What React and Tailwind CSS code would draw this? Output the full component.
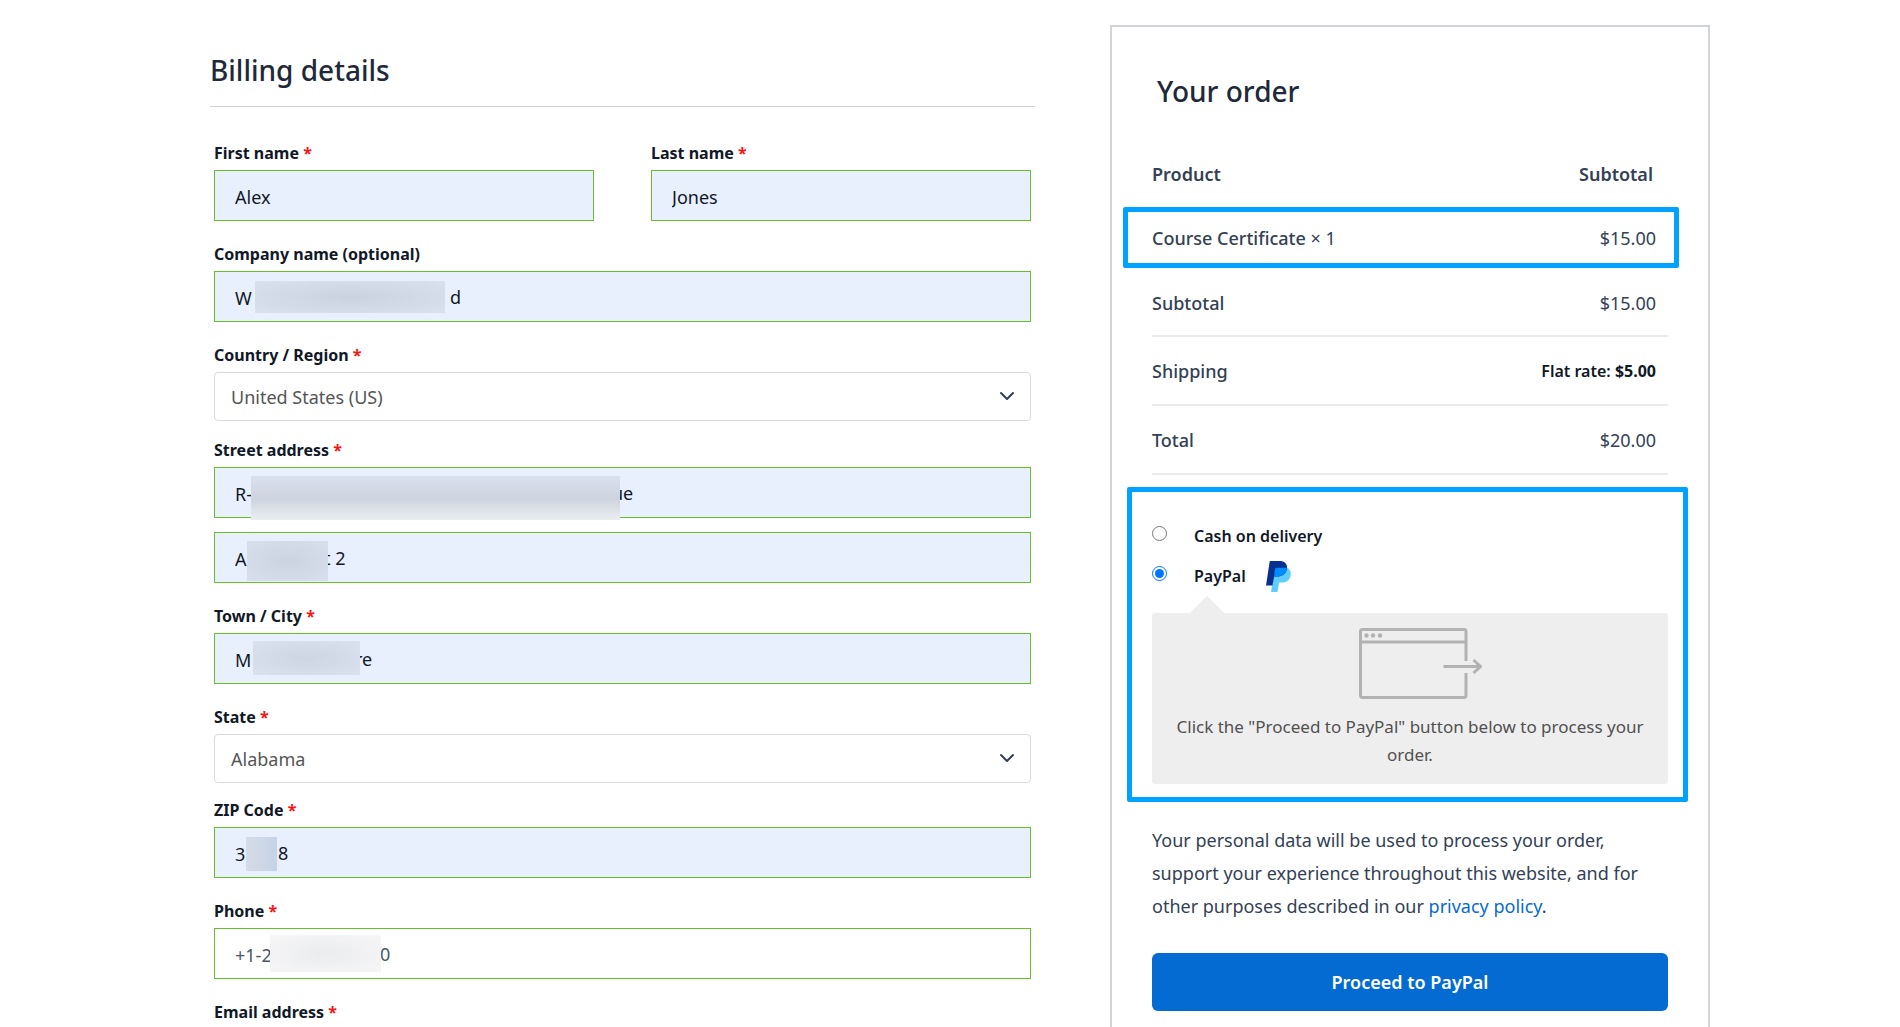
import { ChevronDown } from "lucide-react";

const labelText = "text-[16px] leading-6 font-bold text-[#111827]";

function Label({ htmlFor, children, required = true }) {
  return (
    <label htmlFor={htmlFor} className={`mb-[5px] block ${labelText}`}>
      {children}
      {required && <span className="text-[#ff1010]"> *</span>}
    </label>
  );
}

function Input({ id, value, label, plain, tail, tailClass, maskClass, type = "text" }) {
  return (
    <div className="relative">
      <input
        id={id}
        type={type}
        aria-label={label}
        defaultValue={value}
        className={`block h-[51px] w-full border border-[#69bf29] px-5 pt-[2px] text-[18px] outline-none ${
          plain ? "bg-white text-[#4b5563]" : "bg-[#e8f0fe] text-[#111827]"
        }`}
      />
      {tail && (
        <span
          className={`absolute top-0 flex h-[51px] items-center pt-[2px] text-[18px] whitespace-pre ${
            plain ? "text-[#4b5563]" : "text-[#111827]"
          } ${tailClass}`}
        >
          {tail}
        </span>
      )}
      {maskClass && <span aria-hidden="true" className={`absolute ${maskClass}`} />}
    </div>
  );
}

function Select({ id, value }) {
  return (
    <div className="relative">
      <select
        id={id}
        defaultValue={value}
        className="block h-[49px] w-full appearance-none rounded border border-[#d9dbe0] bg-white px-4 pt-[2px] text-[18px] text-[#555555] outline-none"
      >
        <option>{value}</option>
      </select>
      <ChevronDown className="pointer-events-none absolute top-3 right-3 size-6 text-[#334155]" />
    </div>
  );
}

function Billing() {
  return (
    <section>
      <h2 className="mt-[50px] border-b border-[#cfd2db] pb-4 text-[28px] leading-10 font-medium text-[#1e293b]">
        Billing details
      </h2>
      <form className="flex flex-col gap-[21px] px-1 pt-[34px]">
        <div className="grid grid-cols-2 gap-[57px]">
          <div>
            <Label htmlFor="first">First name</Label>
            <Input id="first" value="Alex" />
          </div>
          <div>
            <Label htmlFor="last">Last name</Label>
            <Input id="last" value="Jones" />
          </div>
        </div>
        <div>
          <Label htmlFor="company" required={false}>
            Company name (optional)
          </Label>
          <Input
            id="company"
            value="W"
            tail="d"
            tailClass="left-[236px]"
            maskClass="top-[10px] left-[41px] h-8 w-[190px] bg-radial from-[#cbd2df] to-[#d9e1ef]"
          />
        </div>
        <div className="flex flex-col gap-[17px]">
          <div>
            <Label htmlFor="country">Country / Region</Label>
            <Select id="country" value="United States (US)" />
          </div>
          <div>
            <Label htmlFor="street">Street address</Label>
            <div className="flex flex-col gap-[14px]">
              <Input
                id="street"
                value="R-"
                tail="ue"
                tailClass="left-[398px]"
                maskClass="top-[9px] left-[37px] h-11 w-[369px] bg-linear-to-b from-[#dae1ee] via-[#cdd3df] to-[#e9eff0]"
              />
              <Input
                id="street2"
                label="Apartment, suite, unit"
                value="A"
                tail="t 2"
                tailClass="left-[110px]"
                maskClass="top-[9px] left-[33px] h-10 w-[81px] bg-radial from-[#ccd3e0] to-[#d8dfed]"
              />
            </div>
          </div>
        </div>
        <div>
          <Label htmlFor="city">Town / City</Label>
          <Input
            id="city"
            value="M"
            tail="re"
            tailClass="left-[141px]"
            maskClass="top-2 left-[39px] h-[34px] w-[107px] bg-radial from-[#ced5e2] to-[#dae1ef]"
          />
        </div>
        <div className="flex flex-col gap-[15px]">
          <div>
            <Label htmlFor="state">State</Label>
            <Select id="state" value="Alabama" />
          </div>
          <div>
            <Label htmlFor="zip">ZIP Code</Label>
            <Input
              id="zip"
              value="3"
              tail="8"
              tailClass="left-[64px]"
              maskClass="top-[10px] left-8 h-[34px] w-[31px] bg-linear-to-r from-[#d5dbe7] to-[#c5d3e6]"
            />
          </div>
        </div>
        <div>
          <Label htmlFor="phone">Phone</Label>
          <Input
            id="phone"
            type="tel"
            plain
            value="+1-2"
            tail="0"
            tailClass="left-[166px]"
            maskClass="top-[7px] left-14 h-[37px] w-[111px] bg-radial from-[#ebecee] to-[#f6f6f7]"
          />
        </div>
        <div>
          <Label htmlFor="email">Email address</Label>
          <Input id="email" type="email" plain value="" />
        </div>
      </form>
    </section>
  );
}

function PayPalMark() {
  return (
    <svg viewBox="0 0 74 92" className="h-[31px] w-[25px]" aria-hidden="true">
      <path d="M25 20H62C71 24 75 33 73 43C71 57 60 64 46 64H39L34 92H15Z" fill="#60cdff" />
      <path d="M11 0H40C56 0 64 10 62 22C60 38 48 46 33 46H24L19 73H0Z" fill="#0a2f8f" />
      <path d="M32 20H62C61 37 49 46 33 46H24L26 27Q27 20 32 20Z" fill="#008cff" />
    </svg>
  );
}

function RedirectDrawing() {
  return (
    <svg viewBox="0 0 123 71" className="ml-5 h-[71px] w-[123px]" fill="none" stroke="#b2b2b2" strokeWidth="3" aria-hidden="true">
      <path d="M107 33V3.5Q107 1.5 105 1.5H3.500Q1.500 1.500 1.500 3.500V67Q1.500 69.500 3.500 69.500H105Q107 69.500 107 67V45" />
      <path d="M1.500 14H107M84.500 38.500H121M114.500 32L121.500 38.500L114.500 45" />
      <g fill="#b2b2b2" stroke="none">
        <circle cx="7.500" cy="7.500" r="2.200" />
        <circle cx="14" cy="7.500" r="2.200" />
        <circle cx="21" cy="7.500" r="2.200" />
      </g>
    </svg>
  );
}

function Radio({ id, checked }) {
  return (
    <input
      id={id}
      type="radio"
      name="payment"
      defaultChecked={checked}
      className="mb-[5px] size-[15px] accent-[#0075ff]"
    />
  );
}

function Order() {
  return (
    <section className="mt-[25px] border-2 border-[#d1d5db] px-10 pt-11">
      <h2 className="px-[5px] text-[28px] leading-10 font-medium text-[#1e293b]">Your order</h2>
      <div className="relative">
        <table className="mt-[31px] w-full text-[18px] leading-[30px] text-[#334155]">
          <thead>
            <tr className="h-16">
              <th className="text-left font-semibold">Product</th>
              <th className="pr-[15px] text-right font-semibold">Subtotal</th>
            </tr>
          </thead>
          <tbody>
            <tr className="h-16">
              <td>
                <span className="font-medium">Course Certificate</span> ×&nbsp;1
              </td>
              <td className="pr-3 text-right">$15.00</td>
            </tr>
            <tr className="h-[66px] border-b-2 border-[#ebebeb]">
              <th className="text-left font-medium">Subtotal</th>
              <td className="pr-3 text-right">$15.00</td>
            </tr>
            <tr className="h-[69px] border-b-2 border-[#ebebeb]">
              <th className="text-left font-medium">Shipping</th>
              <td className="pr-3 text-right text-[16px] font-semibold text-[#111827]">
                Flat rate: <span className="font-bold">$5.00</span>
              </td>
            </tr>
            <tr className="h-[69px] border-b-2 border-[#ebebeb]">
              <th className="text-left font-medium">Total</th>
              <td className="pr-3 text-right">$20.00</td>
            </tr>
          </tbody>
        </table>
        <div className="pointer-events-none absolute top-[65px] -right-[11px] -left-[29px] h-[61px] rounded-[2px] border-[5px] border-[#00a2ff]" />
      </div>

      <div className="mt-3 -mr-5 -ml-[25px] rounded-[2px] border-[5px] border-[#00a2ff] pt-6 pr-[15px] pb-[13px] pl-5">
        <div className="flex h-10 items-center gap-[27px] text-[16px] font-semibold text-[#111827]">
          <Radio id="cod" />
          <label htmlFor="cod">Cash on delivery</label>
        </div>
        <div className="flex h-10 items-center gap-[27px] text-[16px] font-semibold text-[#111827]">
          <Radio id="paypal" checked />
          <label htmlFor="paypal" className="flex items-center gap-5">
            PayPal
            <PayPalMark />
          </label>
        </div>
        <svg viewBox="0 0 36 18" className="ml-[37px] block h-[17px] w-9" aria-hidden="true">
          <path d="M18 0L36 18H0Z" fill="#eeeeee" />
        </svg>
        <div className="flex flex-col items-center rounded-[3px] bg-[#eeeeee] px-4 py-[15px] text-center text-[17px] leading-7 text-[#515151]">
          <RedirectDrawing />
          <p className="mt-[14px]">Click the "Proceed to PayPal" button below to process your order.</p>
        </div>
      </div>

      <p className="mt-[22px] text-[18px] leading-[33px] text-[#334155]">
        Your personal data will be used to process your order, support your experience throughout this website, and for
        other purposes described in our{" "}
        <a href="#privacy" className="text-[#046bd2]">
          privacy policy
        </a>
        .
      </p>
      <button type="button" className="mt-[30px] mb-10 h-[58px] w-full rounded-md bg-[#046bd2] text-[18px] font-semibold text-white">
        Proceed to PayPal
      </button>
    </section>
  );
}

export default function App() {
  return (
    <main className="grid h-screen grid-cols-[55fr_40fr] gap-[75px] overflow-hidden bg-white pr-[190px] pl-[210px] font-['Noto_Sans',sans-serif]">
      <Billing />
      <Order />
    </main>
  );
}
